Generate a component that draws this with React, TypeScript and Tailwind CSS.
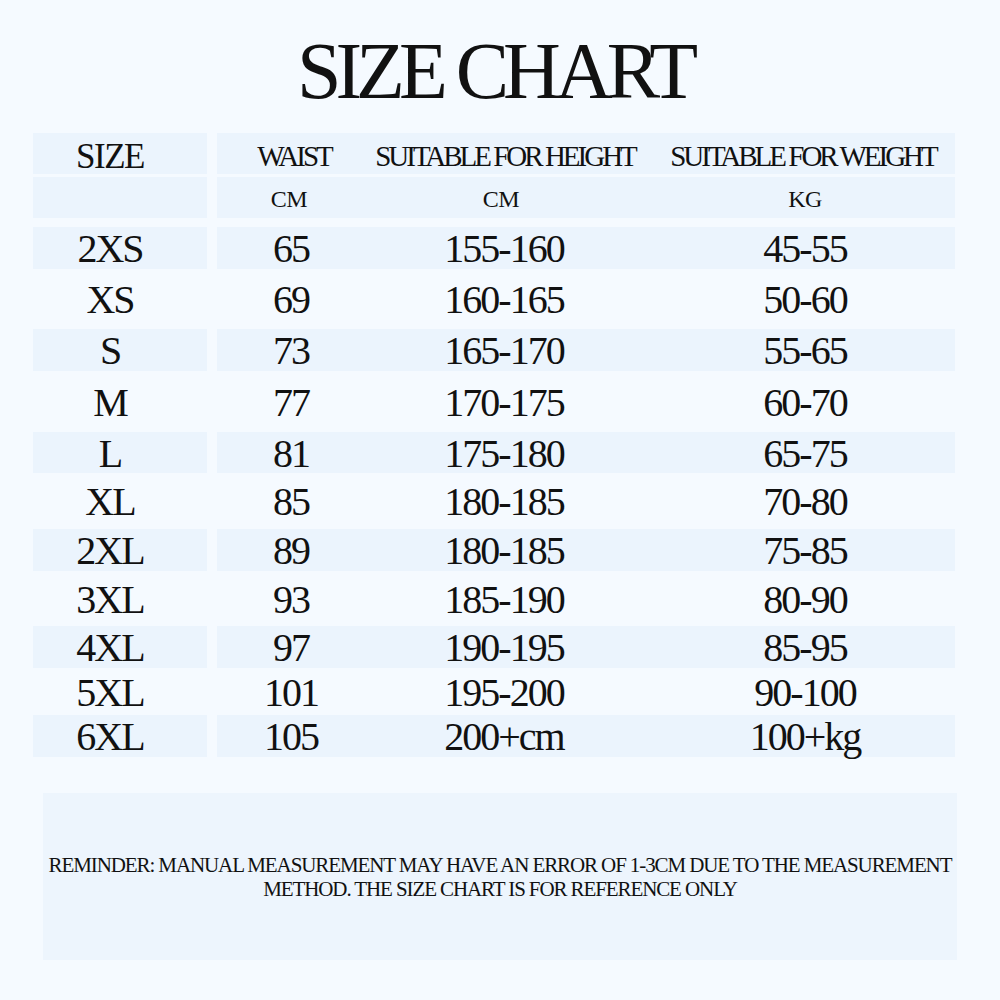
import React from "react";

type Row = { size: string; waist: string; height: string; weight: string; h: string; striped: boolean };

const rows: Row[] = [
  { size: "2XS", waist: "65", height: "155-160", weight: "45-55", h: "h-[42px]", striped: true },
  { size: "XS", waist: "69", height: "160-165", weight: "50-60", h: "h-[60px]", striped: false },
  { size: "S", waist: "73", height: "165-170", weight: "55-65", h: "h-[42px]", striped: true },
  { size: "M", waist: "77", height: "170-175", weight: "60-70", h: "h-[61px]", striped: false },
  { size: "L", waist: "81", height: "175-180", weight: "65-75", h: "h-[41px]", striped: true },
  { size: "XL", waist: "85", height: "180-185", weight: "70-80", h: "h-[56px]", striped: false },
  { size: "2XL", waist: "89", height: "180-185", weight: "75-85", h: "h-[42px]", striped: true },
  { size: "3XL", waist: "93", height: "185-190", weight: "80-90", h: "h-[55px]", striped: false },
  { size: "4XL", waist: "97", height: "190-195", weight: "85-95", h: "h-[42px]", striped: true },
  { size: "5XL", waist: "101", height: "195-200", weight: "90-100", h: "h-[47px]", striped: false },
  { size: "6XL", waist: "105", height: "200+cm", weight: "100+kg", h: "h-[42px]", striped: true },
];

export default function App() {
  return (
    <div className="w-[1000px] h-[1000px] bg-[#f5faff] text-[#111] flex flex-col font-['Liberation_Serif','Times_New_Roman',serif]">
      <div className="pt-[31px] h-[133px]">
        <h1 className="text-center text-[80px] leading-[80px] tracking-[-6px] mr-[11px]">SIZE CHART</h1>
      </div>

      {/* Header row 1 */}
      <div className="flex h-[41px] ml-[33px]">
        <div className="w-[174px] bg-[#ebf4fd] flex">
          <span className="w-[154px] text-center text-[35px] leading-[41px] tracking-[-1.5px] pt-[3px]">SIZE</span>
        </div>
        <div className="w-[10px]" />
        <div className="w-[738px] bg-[#ebf4fd] flex text-[29px] leading-[41px] tracking-[-3px] pt-[3px]">
          <span className="w-[154px] text-center">WAIST</span>
          <span className="w-[268px] text-center">SUITABLE FOR HEIGHT</span>
          <span className="w-[14px]" />
          <span className="w-[300px] text-center">SUITABLE FOR WEIGHT</span>
        </div>
      </div>
      {/* Header row 2 */}
      <div className="flex h-[41px] ml-[33px] mt-[3px]">
        <div className="w-[174px] bg-[#ebf4fd]" />
        <div className="w-[10px]" />
        <div className="w-[738px] bg-[#ebf4fd] flex text-[24px] leading-[41px] tracking-[-0.5px] pt-[2px]">
          <span className="w-[144px] text-center">CM</span>
          <span className="w-[280px] text-center">CM</span>
          <span className="w-[14px]" />
          <span className="w-[300px] text-center">KG</span>
        </div>
      </div>

      <div className="h-[9px]" />

      {rows.map((r) => (
        <div key={r.size} className={`flex ml-[33px] ${r.h}`}>
          <div className={`w-[174px] flex items-center ${r.striped ? "bg-[#ebf4fd]" : ""}`}>
            <span className="w-[154px] text-center text-[40px] leading-none tracking-[-2px] pt-[2px]">{r.size}</span>
          </div>
          <div className="w-[10px]" />
          <div className={`w-[738px] flex items-center text-[40px] leading-none tracking-[-2px] pt-[2px] ${r.striped ? "bg-[#ebf4fd]" : ""}`}>
            <span className="w-[148px] text-center">{r.waist}</span>
            <span className="w-[278px] text-center">{r.height}</span>
            <span className="w-[12px]" />
            <span className="w-[300px] text-center">{r.weight}</span>
          </div>
        </div>
      ))}

      <div className="h-[36px]" />

      <div className="ml-[43px] w-[914px] h-[167px] bg-[#edf5fd] flex flex-col items-center justify-center text-[21px] leading-[24px] tracking-[-1.1px] text-center">
        <p>REMINDER: MANUAL MEASUREMENT MAY HAVE AN ERROR OF 1-3CM DUE TO THE MEASUREMENT</p>
        <p>METHOD. THE SIZE CHART IS FOR REFERENCE ONLY</p>
      </div>
    </div>
  );
}
